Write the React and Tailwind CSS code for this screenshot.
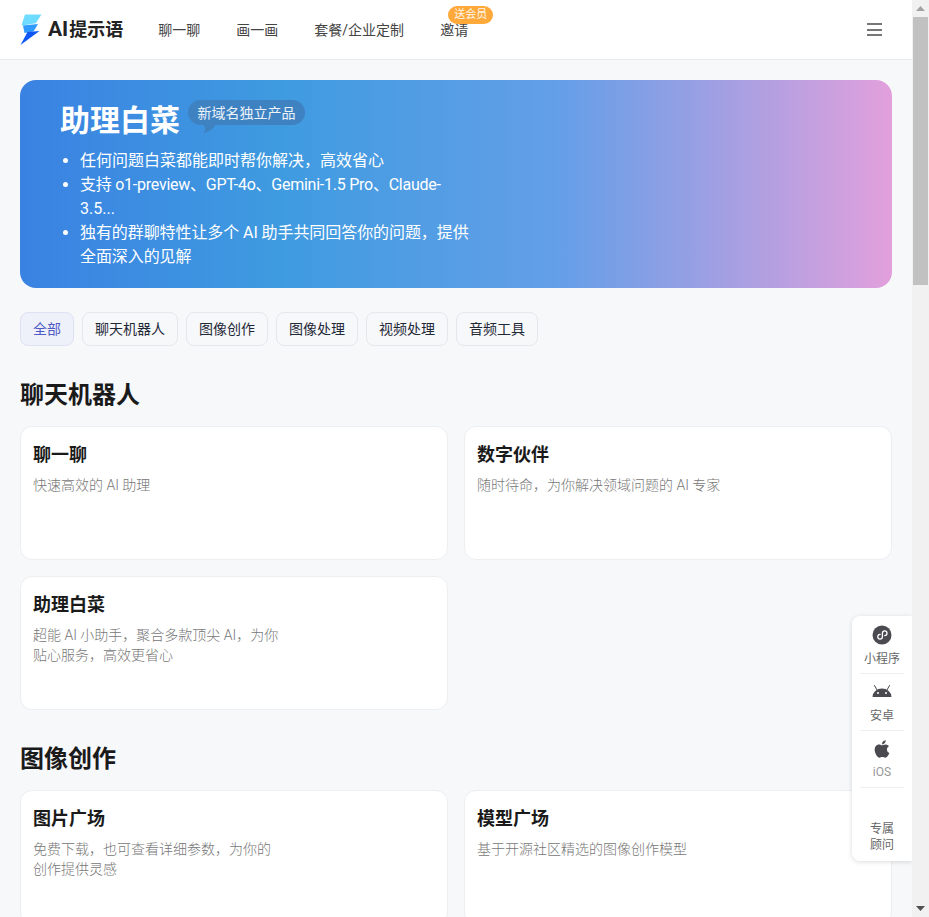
const FONT = { fontFamily: 'Roboto,"Noto Sans CJK SC",sans-serif' };

function Logo() {
  return (
    <svg width="22" height="32" viewBox="0 0 22 32" className="shrink-0">
      <polygon points="5,0.5 21.5,0.5 16,9 17,9 3,11.5 1.5,11" fill="#6fdcff" />
      <polygon points="3,11.5 18,10 13.5,17.5 4.5,19" fill="#2f9bff" />
      <polygon points="7.5,18 19.5,17 0.5,31" fill="#0f57f5" />
    </svg>
  );
}

function Chip({ children, active }) {
  return (
    <div className={active
      ? "h-[34px] px-3 flex items-center rounded-lg border border-[#dfe2f2] bg-[#eef0fa] text-sm text-[#4f5bc4]"
      : "h-[34px] px-3 flex items-center rounded-lg border border-[#e5e7eb] text-sm text-[#1f2937]"}>
      {children}
    </div>
  );
}

function Card({ title, desc }) {
  return (
    <div className="h-[134px] rounded-xl border border-[#eceef1] bg-white px-3 pt-[14px]">
      <div className="text-[18px] leading-7 font-semibold text-[#1a1a1a]">{title}</div>
      <div className="mt-[6px] text-sm leading-5 font-light text-[#777] whitespace-pre-line">{desc}</div>
    </div>
  );
}

function Scrollbar() {
  return (
    <div className="w-[17px] shrink-0 h-full bg-[#f1f1f1] flex flex-col items-center">
      <div className="h-[17px] flex items-center justify-center">
        <svg width="9" height="5" viewBox="0 0 9 5"><polygon points="4.5,0 9,5 0,5" fill="#a3a3a3" /></svg>
      </div>
      <div className="w-[15px] h-[268px] bg-[#c1c1c1]" />
      <div className="flex-1" />
      <div className="h-[17px] flex items-center justify-center">
        <svg width="9" height="5" viewBox="0 0 9 5"><polygon points="0,0 9,0 4.5,5" fill="#505050" /></svg>
      </div>
    </div>
  );
}

function SideItem({ icon, children, cls, text }) {
  return (
    <div className={"mx-[8px] flex flex-col items-center border-b border-[#eeeeee] " + cls}>
      {icon}
      <div className={"text-xs leading-4 " + (text || "text-[#666]")}>{children}</div>
    </div>
  );
}

function SidePanel() {
  return (
    <div className="absolute right-0 top-[616px] w-[60px] h-[245px] bg-white rounded-l-lg shadow-[0_1px_5px_rgba(0,0,0,0.14)]">
      <SideItem cls="h-[58px] pt-[9px] gap-[6px]" icon={
        <svg width="20" height="20" viewBox="0 0 20 20">
          <circle cx="10" cy="10" r="9.5" fill="#4a4a50" />
          <path d="M5.8 11.8c0 1.4 1 2.4 2.3 2.4s2.3-1 2.3-2.4V8.2c0-1.4 1-2.4 2.3-2.4s2.3 1 2.3 2.4-1 2.4-2.3 2.4M8.1 9.4c-1.3 0-2.3 1-2.3 2.4" fill="none" stroke="#fff" strokeWidth="1.3" strokeLinecap="round" />
        </svg>
      } >小程序</SideItem>
      <SideItem cls="h-[57px] pt-[10px] gap-[8px]" icon={
        <svg width="20" height="16" viewBox="0 0 20 16">
          <path d="M0.5 13a9.5 8.5 0 0 1 19 0z" fill="#4a4a50" />
          <path d="M5 6L2.5 1.5M15 6l2.5-4.5" stroke="#4a4a50" strokeWidth="1" strokeLinecap="round" />
          <circle cx="6" cy="9" r="1" fill="#fff" /><circle cx="14" cy="9" r="1" fill="#fff" />
        </svg>
      } >安卓</SideItem>
      <SideItem cls="h-[57px] pt-[8px] gap-[5px]" text="text-[#999]" icon={
        <svg width="18" height="20" viewBox="0 0 384 512" fill="#4a4a50">
          <path d="M318.7 268.7c-.2-36.7 16.4-64.4 50-84.8-18.8-26.9-47.2-41.7-84.7-44.6-35.5-2.8-74.3 20.7-88.5 20.7-15 0-49.4-19.7-76.4-19.7C63.3 141.2 4 184.8 4 273.5q0 39.3 14.4 81.2c12.8 36.7 59 126.7 107.2 125.2 25.2-.6 43-17.9 75.8-17.9 31.8 0 48.3 17.9 76.4 17.9 48.6-.7 90.4-82.5 102.6-119.3-65.2-30.7-61.7-90-61.7-91.9zm-56.6-164.2c27.3-32.4 24.8-61.9 24-72.5-24.1 1.4-52 16.4-67.9 34.9-17.5 19.8-27.8 44.3-25.6 71.9 26.1 2 49.9-11.4 69.5-34.3z" />
        </svg>
      } >iOS</SideItem>
      <div className="pt-[33px] flex flex-col items-center text-xs leading-4 text-[#666]">
        <div>专属</div>
        <div>顾问</div>
      </div>
    </div>
  );
}

export default function App() {
  return (
    <div style={FONT} className="relative flex h-[917px] w-[929px] overflow-hidden bg-[#f7f8fa]">
      <div className="relative flex-1 min-w-0 h-full overflow-hidden">
        <header className="h-[60px] bg-white border-b border-[#e9eaec] flex items-center pl-5 pr-[30px]">
          <Logo />
          <span className="ml-[6px] text-[18px] font-bold text-[#222] whitespace-nowrap"><span className="text-[21px] mr-[1px]">AI</span>提示语</span>
          <nav className="ml-[35px] flex items-center gap-9 text-sm text-[#444]">
            <span>聊一聊</span>
            <span>画一画</span>
            <span className="w-[90px]">套餐/企业定制</span>
            <span className="relative">
              邀请
              <span className="absolute -top-[14px] left-[8px] h-[18px] w-[45px] flex items-center justify-center rounded-full bg-[#ffa93b] text-[11px] text-white/90">送会员</span>
            </span>
          </nav>
          <div className="flex-1" />
          <div className="w-[15px] flex flex-col gap-[3.5px]">
            <div className="h-[2px] bg-[#777]" />
            <div className="h-[2px] bg-[#777]" />
            <div className="h-[2px] bg-[#777]" />
          </div>
        </header>

        <main className="px-5 pt-5">
          <section className="h-[208px] rounded-2xl bg-[linear-gradient(90deg,#3a82e2_0%,#3f9be0_30%,#649fe8_62%,#e2a0dc_100%)] pl-10 pt-[20px] text-white">
            <div className="flex items-start">
              <h1 className="text-[30px] leading-[42px] font-bold">助理白菜</h1>
              <div className="relative ml-[8px] h-[25px] px-[9.5px] flex items-center rounded-full bg-[#3f82c2] text-sm text-white/90">
                新域名独立产品
                <svg className="absolute left-[14px] top-[23px]" width="16" height="10" viewBox="0 0 16 10"><path d="M0 1h14C12 5 8 9 1 10c3-3 3-6-1-9z" fill="#3f82c2" /></svg>
              </div>
            </div>
            <ul className="mt-[7px] w-[395px] ml-5 list-disc text-base leading-6">
              <li>任何问题白菜都能即时帮你解决，高效省心</li>
              <li><span className="tracking-[-0.25px]">支持 o1-preview、GPT-4o、Gemini-1.5 Pro、Claude-</span><br />3.5...</li>
              <li className="tracking-[-0.08px]">独有的群聊特性让多个 AI 助手共同回答你的问题，提供全面深入的见解</li>
            </ul>
          </section>

          <div className="mt-6 flex gap-2">
            <Chip active>全部</Chip>
            <Chip>聊天机器人</Chip>
            <Chip>图像创作</Chip>
            <Chip>图像处理</Chip>
            <Chip>视频处理</Chip>
            <Chip>音频工具</Chip>
          </div>

          <h2 className="mt-[33px] text-2xl leading-8 font-bold text-[#1a1a1a]">聊天机器人</h2>
          <div className="mt-[15px] grid grid-cols-2 gap-4">
            <Card title="聊一聊" desc="快速高效的 AI 助理" />
            <Card title="数字伙伴" desc="随时待命，为你解决领域问题的 AI 专家" />
            <Card title="助理白菜" desc={"超能 AI 小助手，聚合多款顶尖 AI，为你\n贴心服务，高效更省心"} />
          </div>

          <h2 className="mt-[33px] text-2xl leading-8 font-bold text-[#1a1a1a]">图像创作</h2>
          <div className="mt-[15px] grid grid-cols-2 gap-4">
            <Card title="图片广场" desc={"免费下载，也可查看详细参数，为你的\n创作提供灵感"} />
            <Card title="模型广场" desc="基于开源社区精选的图像创作模型" />
          </div>
        </main>
        <SidePanel />
      </div>
      <Scrollbar />
    </div>
  );
}
